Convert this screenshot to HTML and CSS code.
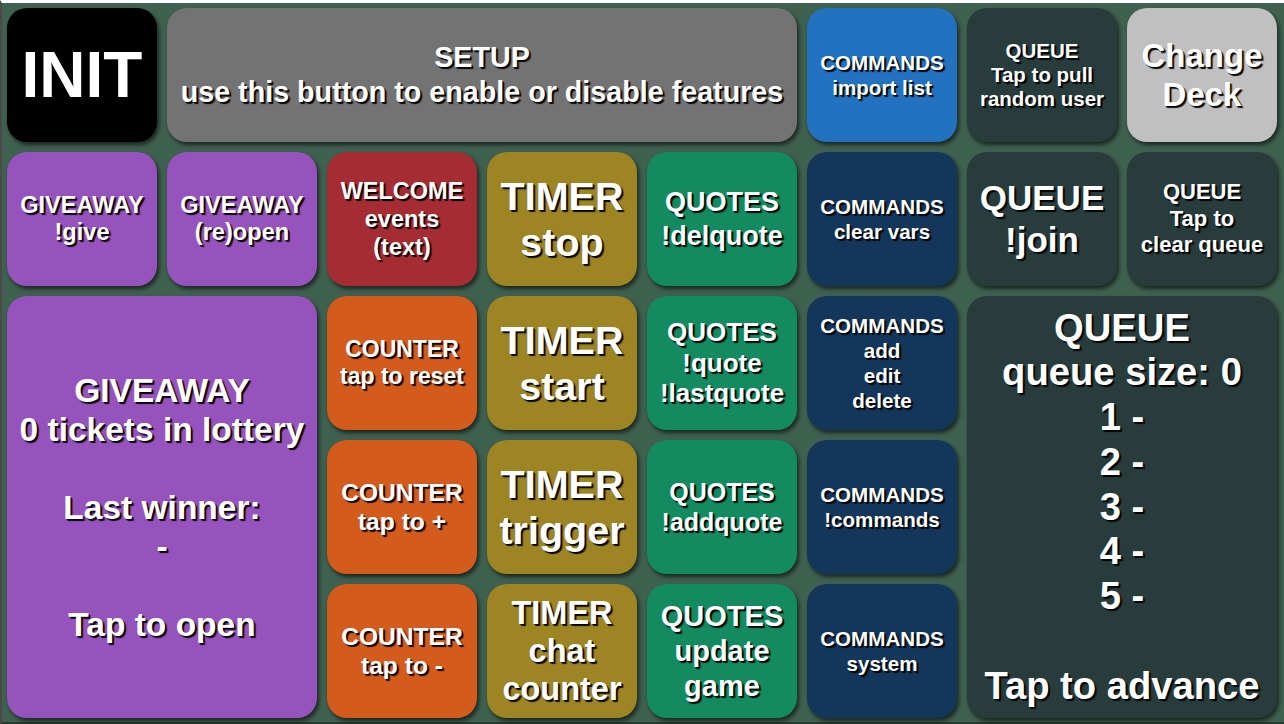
FILE: index.html
```html
<!DOCTYPE html>
<html>
<head>
<meta charset="utf-8">
<link rel="stylesheet" href="styles.css">
</head>
<body>
<div class="deck">
  <div class="key black s-init">INIT</div>
  <div class="key gray s-setup wide4">SETUP<br>use this button to enable or disable features</div>
  <div class="key blue s-cmd">COMMANDS<br>import list</div>
  <div class="key slate s-qpull">QUEUE<br>Tap to pull<br>random user</div>
  <div class="key silver s-deck">Change<br>Deck</div>

  <div class="key purple s-give">GIVEAWAY<br>!give</div>
  <div class="key purple s-give">GIVEAWAY<br>(re)open</div>
  <div class="key red s-welcome">WELCOME<br>events<br>(text)</div>
  <div class="key olive s-timer">TIMER<br>stop</div>
  <div class="key green s-qdel">QUOTES<br>!delquote</div>
  <div class="key navy s-cmd">COMMANDS<br>clear vars</div>
  <div class="key slate s-join">QUEUE<br>!join</div>
  <div class="key slate s-qclear">QUEUE<br>Tap to<br>clear queue</div>

  <div class="key purple s-biggive big">GIVEAWAY<br>0 tickets in lottery<br><br>Last winner:<br>-<br><br>Tap to open</div>
  <div class="key orange s-creset">COUNTER<br>tap to reset</div>
  <div class="key olive s-timer">TIMER<br>start</div>
  <div class="key green s-qquote">QUOTES<br>!quote<br>!lastquote</div>
  <div class="key navy s-cmd">COMMANDS<br>add<br>edit<br>delete</div>
  <div class="key slate s-bigqueue big">QUEUE<br>queue size: 0<br>1 -<br>2 -<br>3 -<br>4 -<br>5 -<br><br>Tap to advance</div>

  <div class="key orange s-cplus">COUNTER<br>tap to +</div>
  <div class="key olive s-timer">TIMER<br>trigger</div>
  <div class="key green s-qadd">QUOTES<br>!addquote</div>
  <div class="key navy s-cmd">COMMANDS<br>!commands</div>

  <div class="key orange s-cplus">COUNTER<br>tap to -</div>
  <div class="key olive s-tchat">TIMER<br>chat<br>counter</div>
  <div class="key green s-qgame">QUOTES<br>update<br>game</div>
  <div class="key navy s-cmd">COMMANDS<br>system</div>
</div>
</body>
</html>
```

FILE: styles.css
```css
html, body {
  margin: 0;
  padding: 0;
}
body {
  width: 1284px;
  height: 724px;
  overflow: hidden;
  background: #3f6150;
  font-family: "Liberation Sans", Arial, sans-serif;
}
.deck {
  box-sizing: border-box;
  height: 724px;
  border-top: 3px solid #ffffff;
  border-left: 2px solid #4a4a4a;
  border-bottom: 2px solid #2c3a33;
  padding: 5px 0 0 5px;
  display: grid;
  grid-template-columns: repeat(8, 150px);
  grid-template-rows: repeat(5, 134px);
  gap: 10px;
}
.key {
  display: flex;
  align-items: center;
  justify-content: center;
  text-align: center;
  border-radius: 20px;
  color: #ffffff;
  font-weight: bold;
  line-height: 1.22;
  text-shadow: 2px 2px 1px rgba(0, 0, 0, 0.95), 1px 1px 0 rgba(0, 0, 0, 0.6);
  box-shadow: 2px 3px 4px rgba(0, 0, 0, 0.6);
  white-space: nowrap;
}
.wide4 { grid-column: span 4; }
.big { grid-column: span 2; grid-row: span 3; }

.black { background: #000000; }
.gray { background: #737373; }
.blue { background: #2272c0; }
.slate { background: #283c3c; }
.silver { background: #c0c0c0; }
.purple { background: #9653bd; }
.red { background: #a52c32; }
.olive { background: #9d8523; }
.green { background: #138a5f; }
.navy { background: #13365a; }
.orange { background: #d35c1c; }

.s-init { font-size: 64px; }
.s-setup { font-size: 28.7px; line-height: 35px; }
.s-cmd { font-size: 20.6px; line-height: 25px; }
.s-qpull { font-size: 20.5px; line-height: 24px; }
.s-deck { font-size: 33px; line-height: 39px; }
.s-give { font-size: 23.6px; line-height: 27px; }
.s-welcome { font-size: 23.5px; line-height: 28px; }
.s-timer { font-size: 39.5px; line-height: 46px; }
.s-qdel { font-size: 27px; line-height: 34px; }
.s-join { font-size: 35px; line-height: 42px; }
.s-qclear { font-size: 22px; line-height: 26.5px; }
.s-biggive { font-size: 33.5px; line-height: 39px; }
.s-creset { font-size: 23px; line-height: 27px; }
.s-cplus { font-size: 24.6px; line-height: 29px; }
.s-qquote { font-size: 26px; line-height: 30.5px; }
.s-qadd { font-size: 25px; line-height: 30px; }
.s-qgame { font-size: 29px; line-height: 35px; }
.s-tchat { font-size: 32.5px; line-height: 38px; }
.s-bigqueue { font-size: 38.2px; line-height: 44.75px; }
```
